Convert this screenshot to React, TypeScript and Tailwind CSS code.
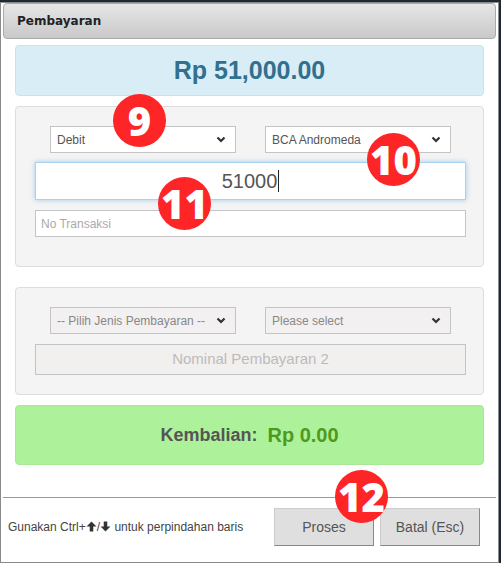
import React from "react";

const Chevron = () => (
  <svg width="10" height="7" viewBox="0 0 10 7" className="shrink-0">
    <path d="M1.5 1.5 L5 5 L8.5 1.5" fill="none" stroke="#333" strokeWidth="2.2" />
  </svg>
);

function FakeSelect({ label, disabled }: { label: string; disabled?: boolean }) {
  return (
    <div
      className={`flex h-[27px] w-[186px] items-center justify-between border border-[#c4c4c4] pl-[6px] pr-[9px] text-[12px] ${
        disabled ? "bg-[#f2f0f0] text-[#888]" : "bg-white text-[#555]"
      }`}
    >
      <span>{label}</span>
      <Chevron />
    </div>
  );
}

function Badge({ n, x, y }: { n: string; x: number; y: number }) {
  return (
    <div
      className="absolute flex h-[53px] w-[53px] items-center justify-center rounded-full bg-[#fe2526] font-['Open_Sans',sans-serif] text-[40px] font-extrabold leading-none text-white"
      style={{ left: x - 26, top: y - 26 }}
    >
      {n}
    </div>
  );
}

const Arrow = ({ down }: { down?: boolean }) => (
  <svg width="11" height="11" viewBox="0 0 10 10" className="inline-block align-[-1px]" style={{ transform: down ? "rotate(180deg)" : undefined }}>
    <path d="M5 0.5 L9.5 5 L6.6 5 L6.6 9.5 L3.4 9.5 L3.4 5 L0.5 5 Z" fill="#333" />
  </svg>
);

export default function App() {
  return (
    <div className="relative h-[563px] w-[501px] overflow-hidden bg-[#1d2a36] pt-[2px] font-['Liberation_Sans',Arial,sans-serif]">
      <div className="flex h-[561px] w-[499px] flex-col border border-[#8a8a8a] bg-white">
        <div className="mx-[2px] flex h-[36px] items-center rounded-[4px] border border-[#aaa] bg-gradient-to-b from-[#e6e6e6] to-[#c9c9c9] pl-[13px] font-['DejaVu_Sans',Verdana,sans-serif] text-[12px] font-bold text-[#222]">
          Pembayaran
        </div>

        <div className="flex flex-col px-[14px]">
          <div className="mt-[6px] flex h-[51px] items-center justify-center rounded-[4px] border border-[#bce8f1] bg-[#d9edf7] text-[25px] font-bold text-[#31708f]">
            Rp 51,000.00
          </div>

          <div className="mt-[10px] flex flex-col rounded-[4px] border border-[#ddd] bg-[#f4f4f4] pb-[29px] pt-[19px]">
            <div className="ml-[34px] flex gap-[29px]">
              <FakeSelect label="Debit" />
              <FakeSelect label="BCA Andromeda" />
            </div>
            <div className="ml-[19px] mt-[9px] flex h-[38px] w-[431px] items-center justify-center border border-[#a9d2ee] bg-white text-[20px] text-[#555] shadow-[0_0_5px_rgba(102,175,233,0.6)]">
              51000<span className="ml-[1px] inline-block h-[22px] w-[1px] bg-[#222]" />
            </div>
            <div className="ml-[19px] mt-[10px] flex h-[27px] w-[431px] items-center border border-[#c4c4c4] bg-white pl-[5px] text-[12px] text-[#aaa]">
              No Transaksi
            </div>
          </div>

          <div className="mt-[20px] flex flex-col rounded-[4px] border border-[#ddd] bg-[#f4f4f4] pb-[19px] pt-[19px]">
            <div className="ml-[34px] flex gap-[29px]">
              <FakeSelect label="-- Pilih Jenis Pembayaran --" disabled />
              <FakeSelect label="Please select" disabled />
            </div>
            <div className="ml-[19px] mt-[10px] flex h-[31px] w-[431px] items-center justify-center border border-[#c4c4c4] bg-[#f2efef] text-[15px] text-[#bbb]">
              Nominal Pembayaran 2
            </div>
          </div>

          <div className="mt-[10px] flex h-[60px] items-center justify-center gap-[10px] rounded-[4px] border border-[#a6e893] bg-[#adf29a] font-bold">
            <span className="text-[18px] text-[#555]">Kembalian:</span>
            <span className="text-[20px] text-[#4e9a1e]">Rp 0.00</span>
          </div>
        </div>

        <div className="mx-[2px] mt-[32px] h-[1px] bg-[#999]" />

        <div className="mt-[10px] flex items-center pl-[7px] pr-[18px]">
          <span className="flex-1 text-[12px] text-[#444]">
            Gunakan Ctrl+<Arrow />/<Arrow down /> untuk perpindahan baris
          </span>
          <div className="flex gap-[6px]">
            <button className="h-[38px] w-[100px] border border-[#ccc] border-b-[#888] border-r-[#888] bg-[#dfdfdf] text-[14px] text-[#555]">
              Proses
            </button>
            <button className="h-[38px] w-[100px] border border-[#ccc] border-b-[#888] border-r-[#888] bg-[#dfdfdf] text-[14px] text-[#555]">
              Batal (Esc)
            </button>
          </div>
        </div>
      </div>

      <Badge n="9" x={139} y={120} />
      <Badge n="10" x={393} y={159} />
      <Badge n="11" x={184} y={203} />
      <Badge n="12" x={361} y={496} />
    </div>
  );
}
